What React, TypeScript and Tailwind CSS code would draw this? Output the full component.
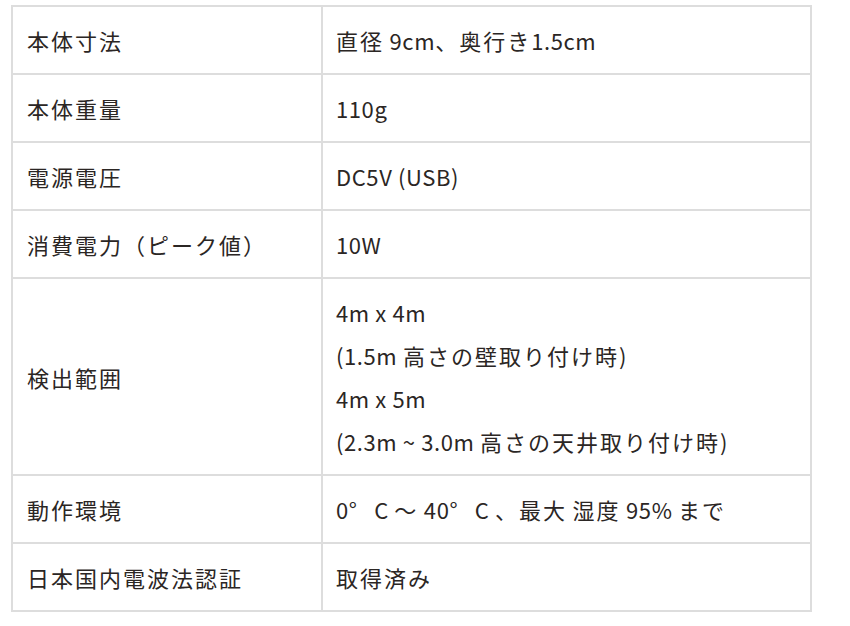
import React from "react";

const rows: { label: string; value: string[] }[] = [
  { label: "本体寸法", value: ["直径 9cm、奥行き1.5cm"] },
  { label: "本体重量", value: ["110g"] },
  { label: "電源電圧", value: ["DC5V (USB)"] },
  { label: "消費電力（ピーク値）", value: ["10W"] },
  {
    label: "検出範囲",
    value: [
      "4m x 4m",
      "(1.5m 高さの壁取り付け時)",
      "4m x 5m",
      "(2.3m ~ 3.0m 高さの天井取り付け時)",
    ],
  },
  { label: "動作環境", value: ["0°   C 〜 40°   C 、最大 湿度 95% まで"] },
  { label: "日本国内電波法認証", value: ["取得済み"] },
];

const isCJK = (c: string) => /[\u3000-\u9fff\uff00-\uffef]/.test(c);

function Txt({ s }: { s: string }) {
  const parts: { cjk: boolean; t: string }[] = [];
  for (const ch of s) {
    const c = isCJK(ch);
    const last = parts[parts.length - 1];
    if (last && last.cjk === c) last.t += ch;
    else parts.push({ cjk: c, t: ch });
  }
  return (
    <>
      {parts.map((p, i) => (
        <span key={i} className={p.cjk ? "tracking-[2px]" : "tracking-[0.6px]"}>
          {p.t}
        </span>
      ))}
    </>
  );
}

export default function App() {
  return (
    <div
      className="w-[850px] h-[626px] bg-white pt-[5px] pl-[11px] text-[#2b2624] text-[22px] leading-[43px]"
      style={{ fontFamily: '"Noto Sans CJK JP", "Noto Sans", sans-serif' }}
    >
      <div className="w-[801px] border-t-2 border-l-2 border-[#dddddd] grid grid-cols-[310px_489px]">
        {rows.map((r) => (
          <React.Fragment key={r.label}>
            <div className="border-r-2 border-b-2 border-[#dddddd] pl-[14px] pt-[12px] pb-[11px] flex items-center">
              <div>
                <Txt s={r.label} />
              </div>
            </div>
            <div className="border-r-2 border-b-2 border-[#dddddd] pl-[13px] pt-[12px] pb-[11px] whitespace-pre">
              {r.value.map((v, i) => (
                <div key={i}>
                  <Txt s={v} />
                </div>
              ))}
            </div>
          </React.Fragment>
        ))}
      </div>
    </div>
  );
}
